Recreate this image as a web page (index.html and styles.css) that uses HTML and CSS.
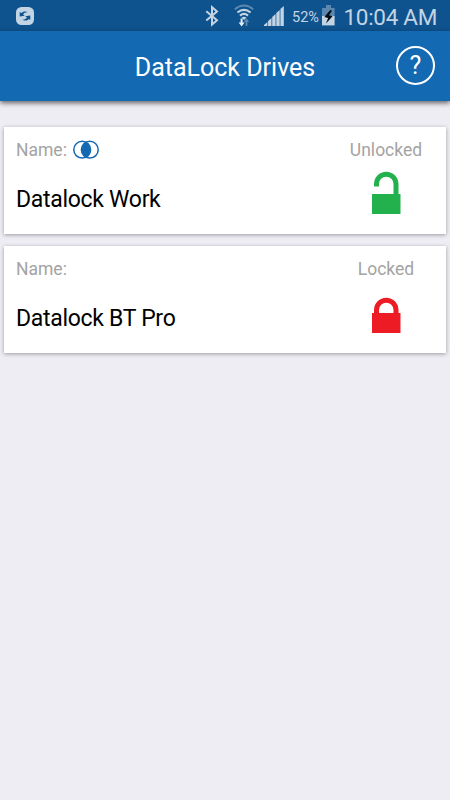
FILE: index.html
```html
<!DOCTYPE html>
<html lang="en">
<head>
    <meta charset="UTF-8">
    <meta name="viewport" content="width=device-width, initial-scale=1.0">
    <title>DataLock Drives</title>
    <link rel="stylesheet" href="styles.css">
</head>
<body>
    <!-- Status bar -->
    <div class="status-bar">
        <svg class="sync-icon" width="18" height="18" viewBox="0 0 18 18">
            <rect width="18" height="18" rx="5.5" fill="#c3d4e4"/>
            <path d="M3.7 9.6V4.9L5.2 6.1C7 4.3 9.8 4 12 5.4C9.6 5.2 8 6.1 7.1 7.6L8.8 8.8Z" fill="#0f538e"/>
            <path d="M14.3 8.4V13.1L12.8 11.9C11 13.7 8.2 14 6 12.6C8.4 12.8 10 11.9 10.9 10.4L9.2 9.2Z" fill="#0f538e"/>
        </svg>
        <svg class="bluetooth-icon" width="14" height="22" viewBox="0 0 14 22">
            <path d="M1.3 6.2L12 15.3L7 19.6V2.2L12 6.4L1.3 15.6" fill="none" stroke="#c3d4e4" stroke-width="2"/>
        </svg>
        <svg class="wifi-icon" width="20" height="24" viewBox="0 0 20 24">
            <path d="M.8 5.3Q10 -2.2 19.2 5.3" fill="none" stroke="#5b88b1" stroke-width="2"/>
            <g fill="none" stroke="#c3d4e4" stroke-width="2.2">
                <path d="M3.4 8.5Q10 3.1 16.6 8.5"/>
                <path d="M6 11.6Q10 8.2 14 11.6"/>
            </g>
            <path d="M7.6 13.6Q10 11.8 12.4 13.6L10 16Z" fill="#c3d4e4"/>
            <path d="M11.6 22V18H9.8L12.5 14L15.2 18H13.4V22Z" fill="#5b88b1"/>
            <path d="M6.6 14.5H8.6V18.6H10.6L7.6 22.4L4.6 18.6H6.6Z" fill="#e4edf5"/>
        </svg>
        <svg class="signal-icon" width="20" height="20" viewBox="0 0 20 20">
            <path d="M0 20V19L3.4 16V20ZM4.1 20V15L7.5 12V20ZM8.2 20V11L11.6 8V20ZM12.3 20V7L15.7 4V20ZM16.4 20V3L19.8 0V20Z" fill="#c3d4e4"/>
        </svg>
        <span class="percent">52%</span>
        <svg class="battery-icon" width="13" height="21" viewBox="0 0 13 21">
            <path d="M4 0H9V3H12.6V12H0V3H4Z" fill="#5b88b1"/>
            <path d="M0 11H12.6V20.4H0Z" fill="#c3d4e4"/>
            <path d="M8.3 5L2.4 12L6.1 13L4 18.4L10.6 11.2L7 10.2L10 5.8Z" fill="#050b10"/>
        </svg>
        <span class="clock">10:04 AM</span>
    </div>

    <!-- Title bar -->
    <header class="header">
        <h1>DataLock Drives</h1>
        <button class="help-button" type="button">?</button>
    </header>

    <!-- Drives -->
    <main class="drives">
        <section class="card">
            <div class="info">
                <div class="label">Name:
                    <svg class="link-icon" width="26" height="20" viewBox="0 0 26 20">
                        <path d="M13 2.2A9 9 0 0 1 13 17.2A9 9 0 0 1 13 2.2Z" fill="#1469b3" stroke="#1469b3"/>
                        <g fill="none" stroke="#1469b3" stroke-width="1.5">
                            <circle cx="9.2" cy="9.7" r="8.4"/>
                            <circle cx="16.8" cy="9.7" r="8.4"/>
                        </g>
                    </svg>
                </div>
                <div class="name">Datalock Work</div>
            </div>
            <div class="state">
                <div class="label">Unlocked</div>
                <svg class="lock" width="29" height="44" viewBox="0 0 29 44">
                    <path d="M4.5 16.5V14A9.75 9.75 0 0 1 24 14V25" fill="none" stroke="#22b14c" stroke-width="5"/>
                    <path d="M0 24H28.5V44H0Z" fill="#22b14c"/>
                </svg>
            </div>
        </section>

        <section class="card">
            <div class="info">
                <div class="label">Name:</div>
                <div class="name">Datalock BT Pro</div>
            </div>
            <div class="state">
                <div class="label">Locked</div>
                <svg class="lock" width="29" height="44" viewBox="0 0 29 44">
                    <path d="M4.5 25V21A9.75 9.75 0 0 1 24 21V25" fill="none" stroke="#ed1c24" stroke-width="5"/>
                    <path d="M0 24H28.5V44H0Z" fill="#ed1c24"/>
                </svg>
            </div>
        </section>
    </main>
</body>
</html>
```
FILE: styles.css
```css
* {
    box-sizing: border-box;
}

body {
    margin: 0;
    min-height: 800px;
    font-family: Roboto, "Liberation Sans", sans-serif;
    background-color: #efedf4;
    color: #000;
}

svg {
    display: block;
    flex-shrink: 0;
}

.status-bar {
    display: flex;
    height: 31px;
    padding: 0 13px 0 16px;
    background-color: #0f538e;
    color: #c3d4e4;
    white-space: nowrap;
}

.sync-icon {
    margin-top: 7px;
}

.bluetooth-icon {
    margin: 5px 0 0 171px;
}

.wifi-icon {
    margin: 4px 0 0 15px;
}

.signal-icon {
    margin: 6px 0 0 10px;
}

.percent {
    width: 30px;
    margin-left: 8px;
    font-size: 14.5px;
    line-height: 35px;
}

.battery-icon {
    margin-top: 5px;
}

.clock {
    margin-left: auto;
    font-size: 22.5px;
    line-height: 35px;
    letter-spacing: -0.3px;
}

.header {
    display: grid;
    grid-template-columns: 1fr auto 1fr;
    align-items: center;
    height: 70px;
    padding: 0 15px;
    background-color: #1469b3;
    color: #fff;
    box-shadow: 0 2px 5px rgba(0, 0, 0, 0.6);
}

h1 {
    grid-column: 2;
    margin: 4px 0 0;
    font-size: 25px;
    font-weight: normal;
    line-height: 30px;
}

.help-button {
    justify-self: end;
    width: 39px;
    height: 39px;
    margin-bottom: 1px;
    padding: 0;
    border: 2px solid #fff;
    border-radius: 50%;
    background: none;
    color: #fff;
    font-family: inherit;
    font-size: 25px;
    line-height: 35px;
}

.drives {
    display: flex;
    flex-direction: column;
    gap: 12px;
    padding: 26px 4px 0;
}

.card {
    display: flex;
    justify-content: space-between;
    height: 107px;
    padding: 13px 12px 0;
    background-color: #fff;
    box-shadow: 0 1px 4px rgba(0, 0, 0, 0.35);
}

.label {
    display: flex;
    gap: 6px;
    height: 20px;
    font-size: 17.5px;
    line-height: 21px;
    color: #a3a3a3;
}

.name {
    margin-top: 25px;
    font-size: 23px;
    line-height: 30px;
    letter-spacing: -0.3px;
}

.state {
    display: flex;
    flex-direction: column;
    align-items: center;
    width: 96px;
}

.lock {
    margin-top: 10px;
}
```
